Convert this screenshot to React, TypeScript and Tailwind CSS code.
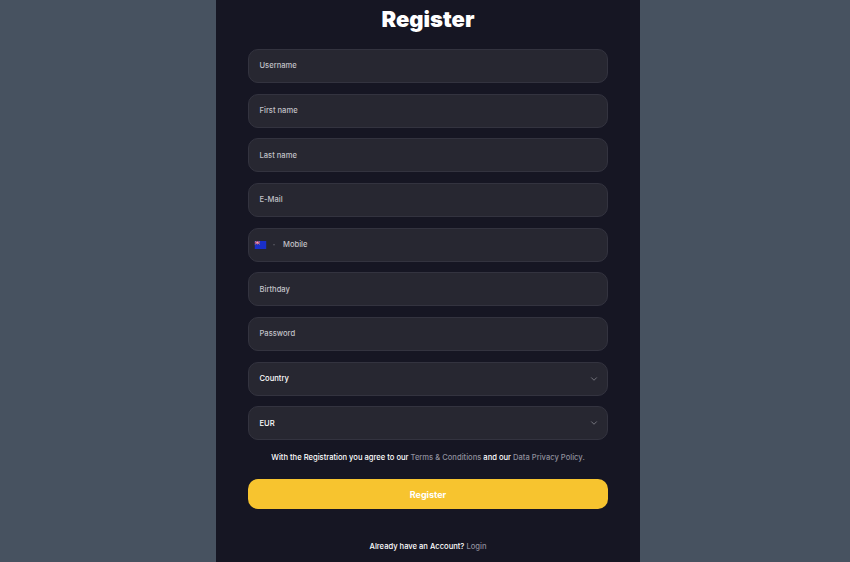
import { ChevronDown } from "lucide-react";

const fieldClass =
  "flex h-[34px] items-center rounded-[10px] border border-[#33333f] bg-[#272731] text-[7.6px] font-medium";

function Field({ label }: { label: string }) {
  return (
    <div className={`${fieldClass} px-[10.5px] text-[#c2c2c8]`}>
      <span>{label}</span>
    </div>
  );
}

function Select({ label }: { label: string }) {
  return (
    <div className={`${fieldClass} justify-between pl-[10.5px] pr-[8px] text-white`}>
      <span>{label}</span>
      <ChevronDown className="h-[10px] w-[10px] text-[#b4b4bc]" strokeWidth={1.3} />
    </div>
  );
}

function PhoneField() {
  return (
    <div className={`${fieldClass} pl-[5px] text-[#c2c2c8]`}>
      <svg viewBox="0 0 20 14" className="h-[8px] w-[13px]">
        <rect width="20" height="14" fill="#1a2fc8" />
        <rect width="9" height="6" fill="#3b2a78" />
        <path d="M0 3h9M4.5 0v6" stroke="#f0506e" strokeWidth="1.8" />
        <path d="M0 0l9 6M9 0L0 6" stroke="#e8e8f0" strokeWidth="0.8" />
      </svg>
      <span className="ml-[6px] h-0 w-0 border-x-[1.5px] border-t-2 border-x-transparent border-t-[#55555f]" />
      <span className="ml-[8px]">Mobile</span>
    </div>
  );
}

export default function App() {
  return (
    <div className="h-[562px] overflow-hidden bg-[#475260] pl-[216px] font-['Inter',sans-serif]">
      <div className="h-full w-[424px] bg-[#161623] px-8">
        <h1 className="pt-[6px] text-center text-[22px] leading-[26px] font-black text-white">Register</h1>
        <form className="mt-[17.2px] flex flex-col gap-[10.65px]">
          <Field label="Username" />
          <Field label="First name" />
          <Field label="Last name" />
          <Field label="E-Mail" />
          <PhoneField />
          <Field label="Birthday" />
          <Field label="Password" />
          <Select label="Country" />
          <Select label="EUR" />
        </form>
        <p className="mt-[11.5px] text-center text-[7.6px] leading-[12px] font-medium text-white">
          With the Registration you agree to our <a className="text-[#8f8f9c]">Terms &amp; Conditions</a> and our{" "}
          <a className="text-[#8f8f9c]">Data Privacy Policy.</a>
        </p>
        <button className="mt-[15.5px] h-[30px] w-full rounded-[10px] bg-[#f7c42f] text-[9px] font-bold text-white">
          Register
        </button>
        <p className="mt-[32px] text-center text-[7.6px] leading-[12px] font-medium text-white">
          Already have an Account? <a className="text-[#8f8f9c]">Login</a>
        </p>
      </div>
    </div>
  );
}
